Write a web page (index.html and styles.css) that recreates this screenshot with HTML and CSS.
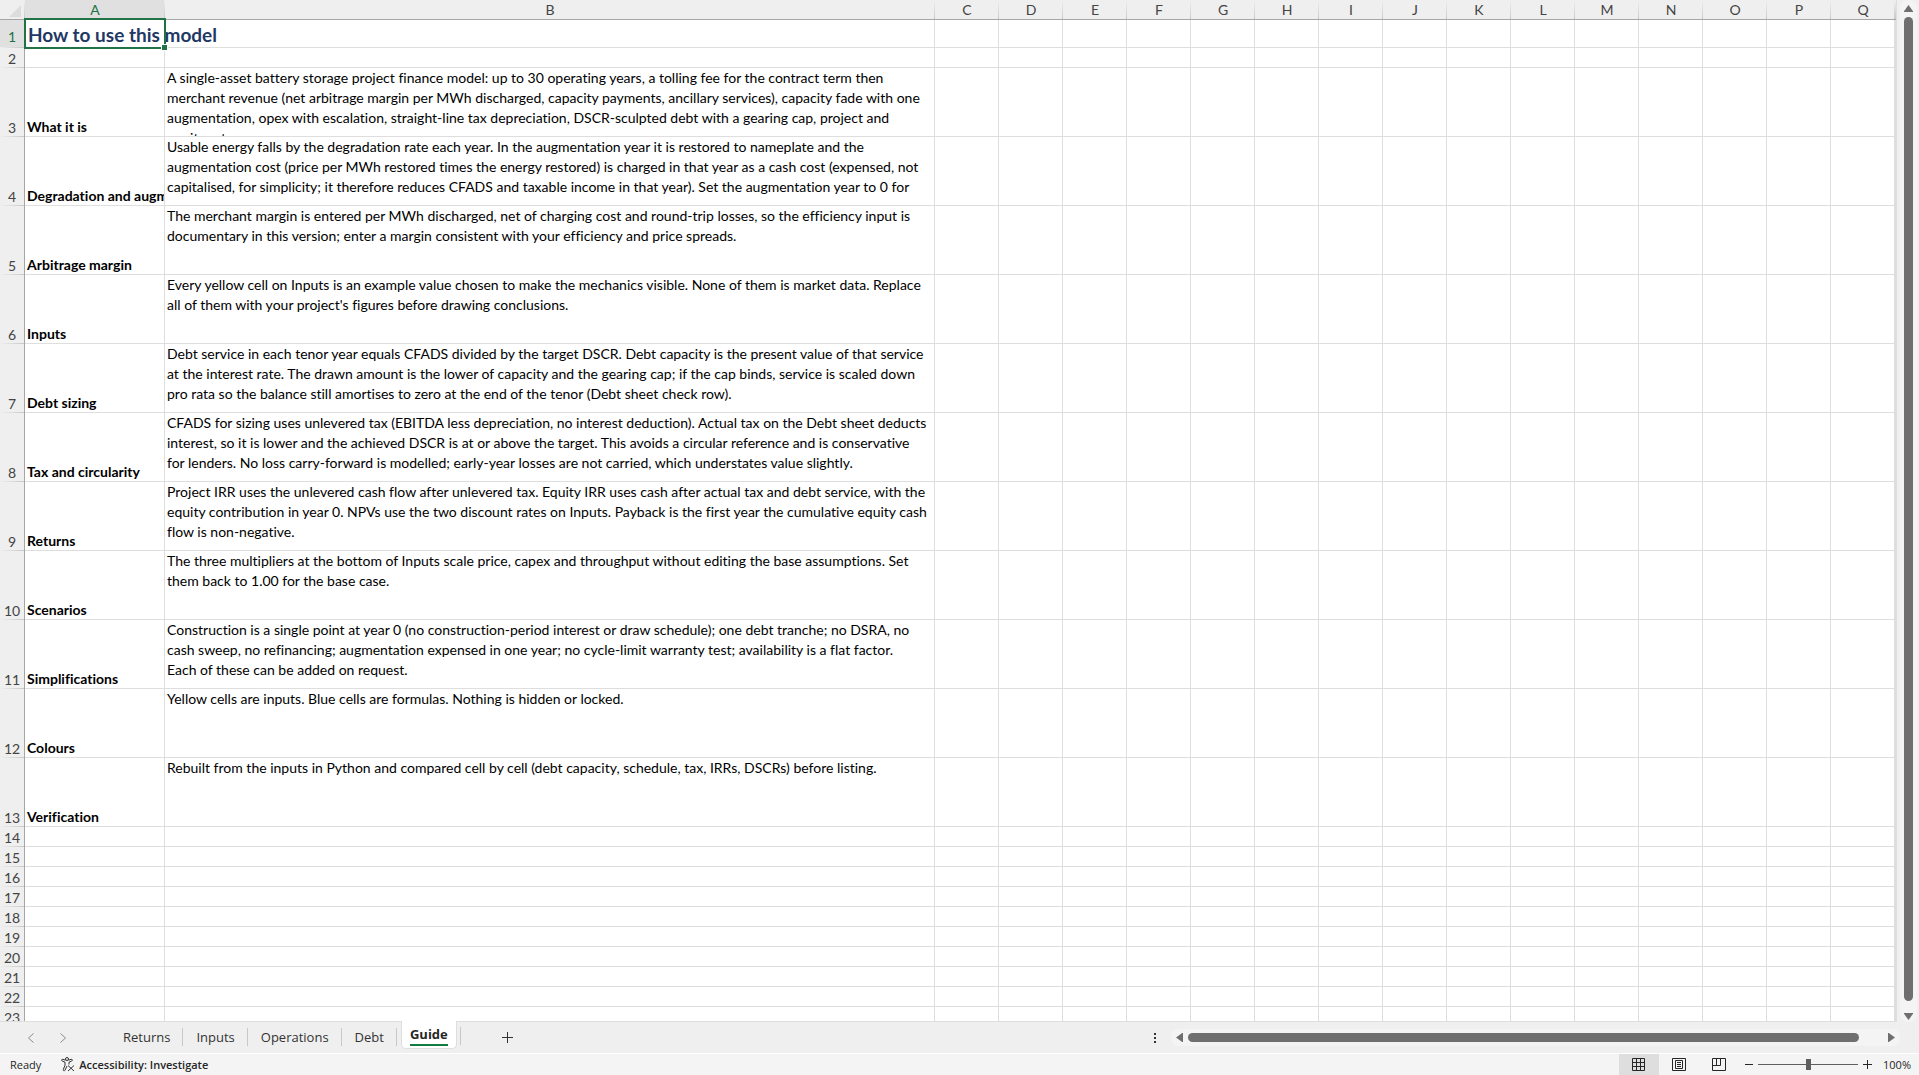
FILE: index.html
```html
<!DOCTYPE html>
<html lang="en">
<head>
  <meta charset="UTF-8" />
  <meta name="viewport" content="width=device-width, initial-scale=1.0" />
  <title>Guide</title>
  <link rel="stylesheet" href="styles.css">
</head>
<body>
  <main class="workspace">
    <div class="sheet">
      <table class="grid">
        <colgroup>
          <col class="col-num">
          <col class="col-a">
          <col class="col-b">
          <col class="col-std" span="15">
          <col>
        </colgroup>
        <thead>
          <tr>
            <th class="corner"><svg width="12" height="12" viewBox="0 0 12 12"><path d="M12 0v12H0z" fill="#dcdcdc"/></svg></th>
            <th class="selected">A</th><th>B</th><th>C</th><th>D</th><th>E</th><th>F</th><th>G</th><th>H</th><th>I</th>
            <th>J</th><th>K</th><th>L</th><th>M</th><th>N</th><th>O</th><th>P</th><th>Q</th><th></th>
          </tr>
        </thead>
        <tbody>
          <tr class="title-row">
            <th class="selected">1</th>
            <td class="active-cell"><h1>How to use this model</h1><span class="handle"></span></td>
            <td></td>
          </tr>
          <tr>
            <th>2</th>
            <td></td>
            <td></td>
          </tr>
          <tr class="tall">
            <th>3</th>
            <td class="label">What it is</td>
            <td><div class="note">A single-asset battery storage project finance model: up to 30 operating years, a tolling fee for the contract term then<br>merchant revenue (net arbitrage margin per MWh discharged, capacity payments, ancillary services), capacity fade with one<br>augmentation, opex with escalation, straight-line tax depreciation, DSCR-sculpted debt with a gearing cap, project and<br>equity returns.</div></td>
          </tr>
          <tr class="tall">
            <th>4</th>
            <td class="label">Degradation and augmentation</td>
            <td><div class="note">Usable energy falls by the degradation rate each year. In the augmentation year it is restored to nameplate and the<br>augmentation cost (price per MWh restored times the energy restored) is charged in that year as a cash cost (expensed, not<br>capitalised, for simplicity; it therefore reduces CFADS and taxable income in that year). Set the augmentation year to 0 for</div></td>
          </tr>
          <tr class="tall">
            <th>5</th>
            <td class="label">Arbitrage margin</td>
            <td><div class="note">The merchant margin is entered per MWh discharged, net of charging cost and round-trip losses, so the efficiency input is<br>documentary in this version; enter a margin consistent with your efficiency and price spreads.</div></td>
          </tr>
          <tr class="tall">
            <th>6</th>
            <td class="label">Inputs</td>
            <td><div class="note">Every yellow cell on Inputs is an example value chosen to make the mechanics visible. None of them is market data. Replace<br>all of them with your project's figures before drawing conclusions.</div></td>
          </tr>
          <tr class="tall">
            <th>7</th>
            <td class="label">Debt sizing</td>
            <td><div class="note">Debt service in each tenor year equals CFADS divided by the target DSCR. Debt capacity is the present value of that service<br>at the interest rate. The drawn amount is the lower of capacity and the gearing cap; if the cap binds, service is scaled down<br>pro rata so the balance still amortises to zero at the end of the tenor (Debt sheet check row).</div></td>
          </tr>
          <tr class="tall">
            <th>8</th>
            <td class="label">Tax and circularity</td>
            <td><div class="note">CFADS for sizing uses unlevered tax (EBITDA less depreciation, no interest deduction). Actual tax on the Debt sheet deducts<br>interest, so it is lower and the achieved DSCR is at or above the target. This avoids a circular reference and is conservative<br>for lenders. No loss carry-forward is modelled; early-year losses are not carried, which understates value slightly.</div></td>
          </tr>
          <tr class="tall">
            <th>9</th>
            <td class="label">Returns</td>
            <td><div class="note">Project IRR uses the unlevered cash flow after unlevered tax. Equity IRR uses cash after actual tax and debt service, with the<br>equity contribution in year 0. NPVs use the two discount rates on Inputs. Payback is the first year the cumulative equity cash<br>flow is non-negative.</div></td>
          </tr>
          <tr class="tall">
            <th>10</th>
            <td class="label">Scenarios</td>
            <td><div class="note">The three multipliers at the bottom of Inputs scale price, capex and throughput without editing the base assumptions. Set<br>them back to 1.00 for the base case.</div></td>
          </tr>
          <tr class="tall">
            <th>11</th>
            <td class="label">Simplifications</td>
            <td><div class="note">Construction is a single point at year 0 (no construction-period interest or draw schedule); one debt tranche; no DSRA, no<br>cash sweep, no refinancing; augmentation expensed in one year; no cycle-limit warranty test; availability is a flat factor.<br>Each of these can be added on request.</div></td>
          </tr>
          <tr class="tall">
            <th>12</th>
            <td class="label">Colours</td>
            <td><div class="note">Yellow cells are inputs. Blue cells are formulas. Nothing is hidden or locked.</div></td>
          </tr>
          <tr class="tall">
            <th>13</th>
            <td class="label">Verification</td>
            <td><div class="note">Rebuilt from the inputs in Python and compared cell by cell (debt capacity, schedule, tax, IRRs, DSCRs) before listing.</div></td>
          </tr>
        </tbody>
      </table>
    </div>
    <div class="scroll scroll-y">
      <button aria-label="Scroll up"><svg width="9" height="7" viewBox="0 0 9 7"><path d="M4.5 0 9 6.2V7H0v-.8z"/></svg></button>
      <div class="thumb"></div>
      <button aria-label="Scroll down"><svg width="9" height="7" viewBox="0 0 9 7"><path d="M4.5 7 9 .8V0H0v.8z"/></svg></button>
    </div>
  </main>

  <nav class="tabbar">
    <div class="tab-arrows">
      <button aria-label="Previous sheet"><svg width="8" height="10" viewBox="0 0 8 10"><path d="M6.5.5 1.5 5l5 4.5"/></svg></button>
      <button aria-label="Next sheet"><svg width="8" height="10" viewBox="0 0 8 10"><path d="m1.5.5 5 4.5-5 4.5"/></svg></button>
    </div>
    <div class="tabs">
      <a class="tab" href="#returns">Returns</a>
      <a class="tab" href="#inputs">Inputs</a>
      <a class="tab" href="#operations">Operations</a>
      <a class="tab" href="#debt">Debt</a>
      <a class="tab current" href="#guide"><span>Guide</span></a>
    </div>
    <button class="add" aria-label="New sheet"><svg width="11" height="11" viewBox="0 0 11 11"><path d="M5.5 0v11M0 5.5h11"/></svg></button>
    <button class="kebab" aria-label="Resize tabs"><svg width="2" height="10" viewBox="0 0 2 10"><path d="M0 0h2v2H0zM0 4h2v2H0zM0 8h2v2H0z"/></svg></button>
    <div class="scroll scroll-x">
      <button aria-label="Scroll left"><svg width="7" height="9" viewBox="0 0 7 9"><path d="M0 4.5 6.2 0H7v9h-.8z"/></svg></button>
      <div class="thumb"></div>
      <button aria-label="Scroll right"><svg width="7" height="9" viewBox="0 0 7 9"><path d="M7 4.5.8 0H0v9h.8z"/></svg></button>
    </div>
  </nav>

  <footer class="status">
    <span class="ready">Ready</span>
    <button class="access">
      <svg width="14" height="15" viewBox="0 0 14 15"><circle cx="6" cy="2" r="1.5"/><path d="M4.500 3.200 1.800 2.300c-1.200-.3-1.700 1.200-.6 1.700L4 5.200v3L2.300 12.500c-.4 1.300 1.200 1.800 1.700.7L6 9M7.500 3.200l2.700-.9c1.200-.3 1.700 1.200.6 1.700L8 5.200v2.300M7 8.500l6 5.500M13 8.500 7 14"/></svg>
      Accessibility: Investigate
    </button>
    <div class="views">
      <button class="on" aria-label="Normal"><svg width="14" height="14" viewBox="0 0 14 14"><path d="M.5.5h12v12H.5zM4.5.5v12M8.5.5v12M.5 4.5h12M.5 8.5h12"/></svg></button>
      <button aria-label="Page layout"><svg width="14" height="14" viewBox="0 0 14 14"><path d="M.5.5h13v12H.5zM3.5 2.5h7v8h-7zM5 4.5h4M5 6.5h4M5 8.5h4"/></svg></button>
      <button aria-label="Page break preview"><svg width="14" height="14" viewBox="0 0 14 14"><path d="M.5.5h13v12H.5zM.5 7.5h8v-7M4.5.5v7"/></svg></button>
    </div>
    <div class="zoom">
      <button aria-label="Zoom out"><svg width="8" height="9" viewBox="0 0 8 9"><path d="M0 4.5h8"/></svg></button>
      <input type="range" min="0" max="200" value="100" aria-label="Zoom">
      <button aria-label="Zoom in"><svg width="9" height="9" viewBox="0 0 9 9"><path d="M0 4.5h9M4.5 0v9"/></svg></button>
      <span class="percent">100%</span>
    </div>
  </footer>

  <script src="grid.js"></script>
</body>
</html>
```

FILE: styles.css
```css
* {
  box-sizing: border-box;
}

body {
  display: flex;
  flex-direction: column;
  height: 100vh;
  margin: 0;
  overflow: hidden;
  background: #efefef;
  color: #262626;
  font-family: "Open Sans", sans-serif;
  font-size: 11px;
}

button {
  display: flex;
  align-items: center;
  justify-content: center;
  padding: 0;
  border: 0;
  background: none;
  color: inherit;
  font: inherit;
}

svg {
  display: block;
  flex: none;
}

.workspace {
  display: flex;
  flex: 1;
  min-height: 0;
}

.sheet {
  flex: 1;
  min-width: 0;
  overflow: hidden;
  border-right: 1px solid #dedede;
  border-bottom: 1px solid #dedede;
  background: #fff;
}

/* Cells */
.grid {
  width: 100%;
  table-layout: fixed;
  border-collapse: separate;
  border-spacing: 0;
  font-family: Lato, sans-serif;
  font-size: 14px;
  font-variant-ligatures: none;
  line-height: 20px;
  color: #000;
}

.col-num { width: 25px; }
.col-a { width: 140px; }
.col-b { width: 770px; }
.col-std { width: 64px; }

.grid th,
.grid td {
  height: 20px;
  padding: 0;
  overflow: hidden;
  white-space: nowrap;
}

.grid td {
  border-right: 1px solid #dedede;
  border-bottom: 1px solid #dedede;
  line-height: 19px;
  vertical-align: bottom;
}

.grid th {
  color: #444;
  font-weight: normal;
}

.grid thead th {
  border-bottom: 1px solid #a6a6a6;
  background: linear-gradient(#efefef, #c8c8c8) right / 1px 100% no-repeat #efefef;
  line-height: 19px;
}

.grid tbody th {
  border-right: 1px solid #a6a6a6;
  background: linear-gradient(to right, #efefef, #c8c8c8) bottom / 100% 1px no-repeat #efefef;
  line-height: 19px;
  vertical-align: bottom;
}

.grid th.selected {
  background-color: #e0e0e0;
  color: #217346;
}

.grid .corner svg {
  margin: 2px 0 0 9px;
}

.grid .title-row > * {
  height: 28px;
}

.grid .title-row th {
  padding-bottom: 2px;
}

.grid .tall > * {
  height: 69px;
}

.grid .label {
  padding-left: 2px;
  font-weight: bold;
}

.note {
  height: 68px;
  padding-left: 2px;
  overflow: hidden;
  line-height: 20px;
}

.grid .active-cell {
  position: relative;
  overflow: visible;
}

.active-cell h1 {
  margin: 0;
  padding-left: 3px;
  color: #1f3864;
  font-size: 19px;
  line-height: 24px;
}

.active-cell::after {
  content: "";
  position: absolute;
  inset: -2px -2px -2px -1px;
  border: 2px solid #217346;
}

.handle {
  position: absolute;
  right: -4px;
  bottom: -4px;
  z-index: 1;
  width: 7px;
  height: 7px;
  border: 1px solid #fff;
  background: #217346;
}

/* Scroll bars */
.scroll {
  display: flex;
  align-items: center;
  border-radius: 8px;
  background: #f4f4f4;
  fill: #6f6f6f;
}

.scroll .thumb {
  flex: 1;
  border-radius: 5px;
  background: #6f6f6f;
}

.scroll-y {
  flex-direction: column;
  gap: 5px;
  width: 17px;
  margin: 0 2px 0 3px;
  padding: 5px 0 2px;
}

.scroll-y .thumb {
  width: 9px;
  margin-bottom: 7px;
}

.scroll-x {
  gap: 5px;
  width: 38%;
  height: 17px;
  margin-right: 19px;
  padding: 0 5px;
}

.scroll-x .thumb {
  height: 9px;
  margin-right: 24px;
}

/* Sheet tabs */
.tabbar {
  display: flex;
  align-items: center;
  height: 31px;
  font-size: 13px;
}

.tab-arrows {
  display: flex;
  gap: 24px;
  padding: 0 43px 0 27px;
  fill: none;
  stroke: #8a8a8a;
}

.tabs {
  display: flex;
  height: 31px;
}

.tab {
  position: relative;
  padding: 0 13px;
  color: #333;
  line-height: 30px;
  text-decoration: none;
}

.tab::after {
  content: "";
  position: absolute;
  top: 6px;
  right: 0;
  width: 1px;
  height: 18px;
  background: #c8c8c8;
}

.tab.current {
  height: 28px;
  margin: -1px 3px 0 4px;
  padding: 0 8px;
  border: 1px solid #dedede;
  border-top: 0;
  border-radius: 0 0 5px 5px;
  background: #fff;
  color: #262626;
  font-weight: bold;
}

.tab.current::after {
  right: -5px;
}

.tab.current span {
  display: block;
  height: 25px;
  border-bottom: 2px solid #107c41;
  line-height: 26px;
}

.add {
  margin-left: 42px;
  stroke: #333;
}

.kebab {
  margin: 0 15px 0 auto;
  fill: #333;
}

/* Status bar */
.status {
  display: flex;
  align-items: center;
  height: 22px;
  padding-left: 10px;
  border-top: 1px solid #fff;
  background: #f4f4f4;
}

.access {
  gap: 4px;
  margin-left: 20px;
  font-weight: 600;
}

.access svg {
  fill: none;
  stroke: #333;
}

.views {
  display: flex;
  height: 21px;
  margin-left: auto;
}

.views button {
  width: 40px;
}

.views .on {
  background: #dedede;
}

.views svg {
  fill: none;
  stroke: #262626;
}

.zoom {
  display: flex;
  align-items: center;
  padding: 0 8px 0 6px;
  stroke: #262626;
}

.zoom input {
  width: 100px;
  height: 12px;
  margin: 0 5px;
  appearance: none;
  background: linear-gradient(#5f5f5f, #5f5f5f) center / 100% 1px no-repeat;
}

.zoom input::-webkit-slider-thumb {
  appearance: none;
  width: 5px;
  height: 11px;
  background: #5f5f5f;
}

.percent {
  width: 39px;
  text-align: right;
  stroke: none;
}
```

FILE: grid.js
```javascript
const body = document.querySelector('.grid tbody');

// Blank rows below the guide text
for (let n = 14; n <= 23; n++) {
  const row = body.insertRow();
  const head = document.createElement('th');
  head.textContent = n;
  row.appendChild(head);
}

// Fill every row out to the last column
for (const row of body.rows) {
  while (row.cells.length < 19) {
    row.insertCell();
  }
}
```
